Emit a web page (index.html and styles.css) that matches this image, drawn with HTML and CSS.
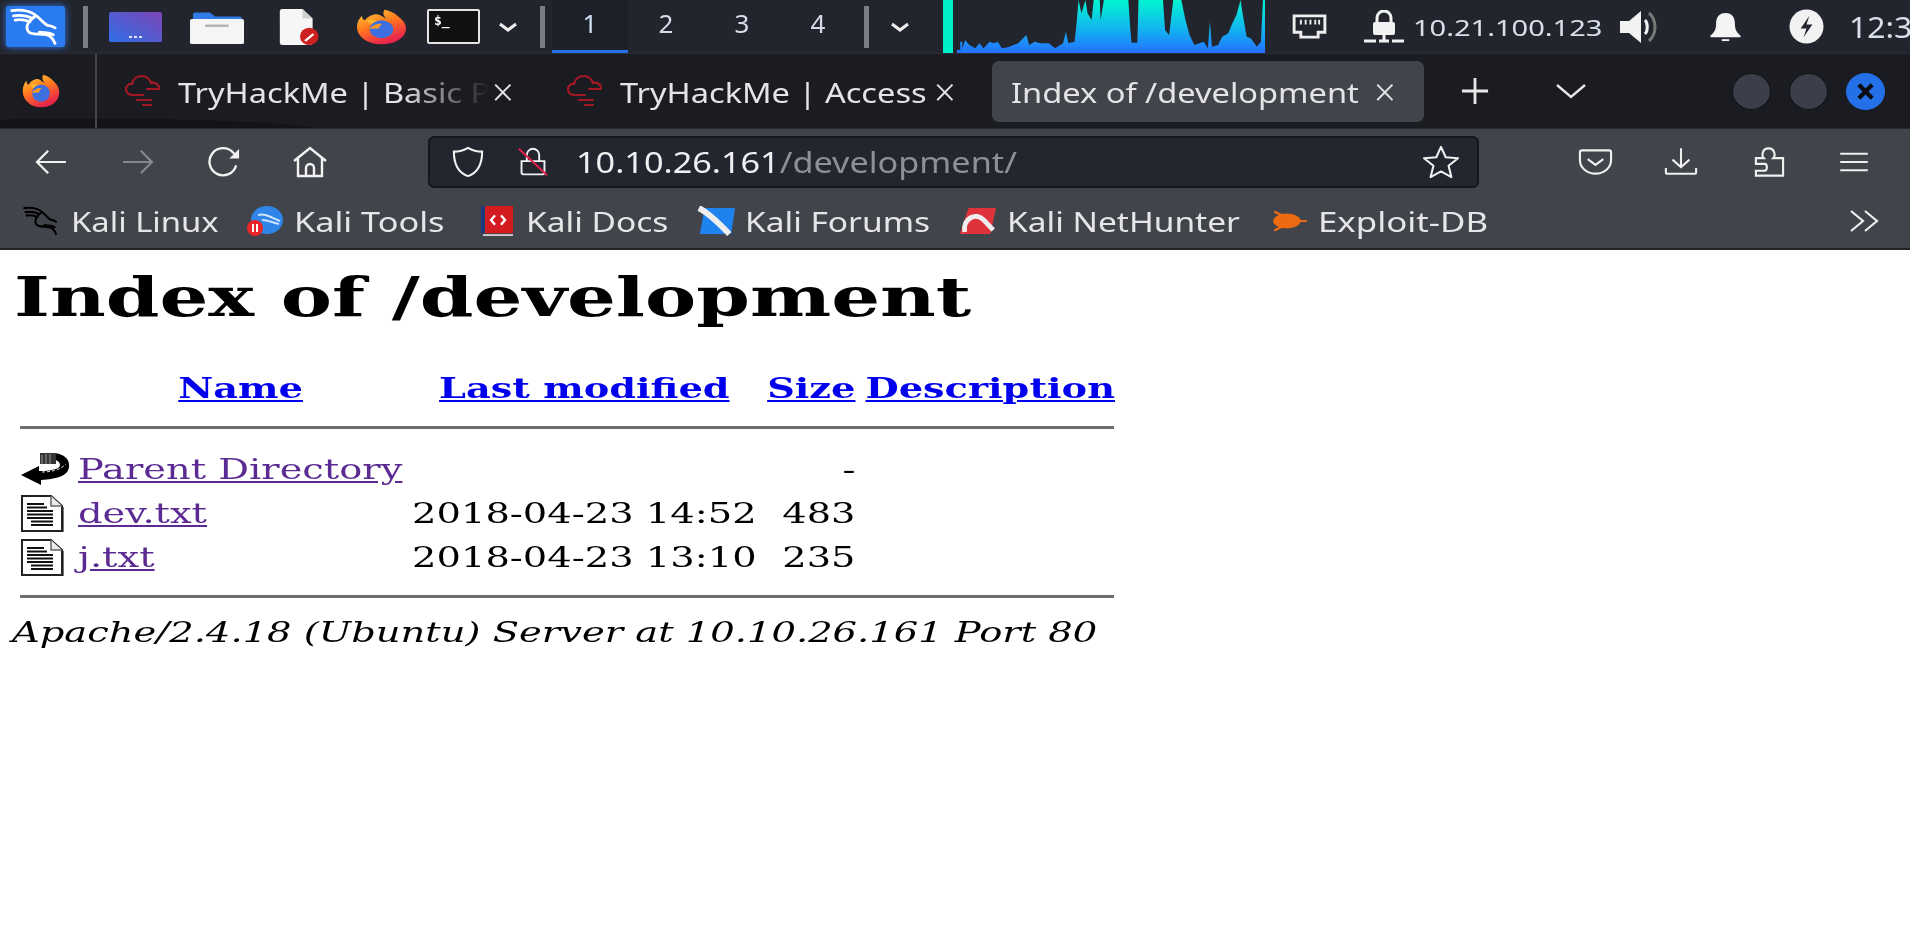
FILE: index.html
```html
<!DOCTYPE html>
<html lang="en">
<head>
<meta charset="utf-8">
<title>Index of /development</title>
<link rel="stylesheet" href="styles.css">
</head>
<body>
<svg class="defs" width="0" height="0" aria-hidden="true">
  <defs>
    <linearGradient id="gGraph" x1="0" y1="0" x2="0" y2="1"><stop offset="0" stop-color="#00f5d0"/><stop offset=".55" stop-color="#12b4f0"/><stop offset="1" stop-color="#2470ff"/></linearGradient>
    <linearGradient id="gPurple" x1="0" y1="1" x2="1" y2="0"><stop offset="0" stop-color="#2f6fe8"/><stop offset="1" stop-color="#7c45b5"/></linearGradient>
    <linearGradient id="gFox" x1="0" y1="0" x2=".5" y2="1"><stop offset="0" stop-color="#ffd53a"/><stop offset=".5" stop-color="#ff7a1e"/><stop offset="1" stop-color="#e8234c"/></linearGradient>
    <symbol id="fox" viewBox="0 0 52 48" preserveAspectRatio="none">
      <path d="M26 47C11 47 1 36 1 24c0-6 2-11 5-15 0 3 1 5 3 6 2-4 6-7 11-8 5 0 6 3 11 6-3-4-4-8-2-12 7 2 11 5 15 10 4 4 7 9 7 15 0 12-11 21-25 21z" fill="url(#gFox)"/>
      <path d="M11 15c4-2 9-1 12 2-3 0-6 1-7 3-3-1-4-3-5-5z" fill="#ffb52e"/>
      <circle cx="26" cy="27" r="12" fill="#3d6fe0"/>
      <path d="M14 27c2-5 8-8 13-7-3 2-4 4-3 6-4 0-7 0-10 1z" fill="#ff9a25"/>
    </symbol>
    <symbol id="dragon" viewBox="0 0 60 44" preserveAspectRatio="none">
      <path d="M2 3c9-1 20 0 27 5 6 4 9 9 14 12 M4 9c8-1 16 0 22 3 M6 14c6-1 12 0 17 2 M30 9c-8 5-13 12-9 18 4 5 13 2 21 4 5 1 8 5 10 10 M34 28c6 1 11 0 16 3 M43 20c3 0 6 1 9 3" fill="none" stroke="currentColor" stroke-width="3.2" stroke-linecap="round"/>
    </symbol>
    <symbol id="cloud" viewBox="0 0 40 34">
      <path d="M8 21c-5 0-7-3-7-6s3-6 6-5c1-5 5-8 10-8 4 0 8 3 9 7 2-1 7 0 8 4M8 21h10M22 15h12M12 26h14M18 31h8" fill="none" stroke="#a31822" stroke-width="2.2" stroke-linecap="round"/>
    </symbol>
    <symbol id="doc" viewBox="0 0 44 37">
      <path d="M43 12v25H4" fill="none" stroke="#777" stroke-width="2"/>
      <path d="M2 1h29l11 10v25H2z" fill="#fff" stroke="#222" stroke-width="2"/>
      <path d="M31 1v10h11" fill="#ececec" stroke="#666" stroke-width="1.5"/>
      <path d="M7 9h17M7 12.500h20M7 16h26M7 19.500h26M7 23h26M11 26.500h22M11 30h22" stroke="#111" stroke-width="2"/>
    </symbol>
  </defs>
</svg>

<div class="screen">
  <header class="panel">
    <div class="kali-tile"><svg class="kali-dragon"><use href="#dragon"/></svg></div>
    <i class="sep sep-a"></i>
    <svg class="launcher l-desktop" viewBox="0 0 53 36" preserveAspectRatio="none"><rect y="0" width="53" height="36" rx="2" fill="url(#gPurple)"/><path d="M20 30h3M25 30h3M30 30h3" stroke="#dfe6ff" stroke-width="2.4"/></svg>
    <svg class="launcher l-folder" viewBox="0 0 54 42" preserveAspectRatio="none"><path d="M3 6a3 3 0 0 1 3-3h14l5 5h24a3 3 0 0 1 3 3v6H3z" fill="#2f7be8"/><rect y="11" width="54" height="31" rx="2" fill="#f5f5f5"/><rect x="15" y="18" width="24" height="3" rx="1.5" fill="#b4b4b4"/></svg>
    <svg class="launcher l-file" viewBox="0 0 50 46" preserveAspectRatio="none"><path d="M1 3a3 3 0 0 1 3-3h24l12 12v31a3 3 0 0 1-3 3H4a3 3 0 0 1-3-3z" fill="#f6f6f6"/><path d="M28 0l12 12H28z" fill="#cfcfcf"/><circle cx="36" cy="35" r="11" fill="#cc1f1f"/><path d="M30 40l10-9 2 2-10 9z" fill="#fff"/></svg>
    <svg class="launcher l-fox"><use href="#fox"/></svg>
    <div class="term"><span>$_</span></div>
    <svg class="chev l-chev1" viewBox="0 0 20 10"><path d="M2 2l8 6 8-6" fill="none" stroke="#eee" stroke-width="3"/></svg>
    <i class="sep sep-b"></i>
    <nav class="workspaces">
      <span class="ws ws-on">1</span><span class="ws">2</span><span class="ws">3</span><span class="ws">4</span>
    </nav>
    <i class="sep sep-c"></i>
    <svg class="chev l-chev2" viewBox="0 0 20 10"><path d="M2 2l8 6 8-6" fill="none" stroke="#eee" stroke-width="3"/></svg>
    <i class="cpu-bar"></i>
    <svg class="graph" viewBox="780 0 755 159" preserveAspectRatio="none"><polygon fill="url(#gGraph)" points="780,159 780,150 788,150 788,125 793,125 793,145 800,120 810,135 825,145 835,130 845,145 860,125 870,130 880,125 890,145 905,142 930,130 950,105 957,135 970,125 985,130 1005,130 1020,145 1040,130 1047,95 1053,130 1068,125 1072,85 1078,0 1085,40 1095,0 1100,40 1110,60 1115,0 1130,0 1132,60 1140,0 1200,0 1205,90 1208,128 1222,128 1225,0 1285,0 1290,90 1300,105 1310,0 1330,0 1340,60 1350,105 1362,135 1385,125 1395,145 1400,65 1405,140 1420,135 1430,110 1445,100 1455,70 1465,45 1475,0 1480,40 1490,110 1500,115 1515,140 1525,125 1530,0 1535,0 1535,159"/></svg>
    <svg class="tray t-net" viewBox="0 0 36 26"><path d="M2 2h32v17h-7v5H9v-5H2z" fill="none" stroke="#eee" stroke-width="3"/><path d="M9 6v5M14 6v5M19 6v5M24 6v5M28 6v5" stroke="#eee" stroke-width="2"/></svg>
    <svg class="tray t-lock" viewBox="0 0 40 34"><path d="M13 12V8a7 7 0 0 1 14 0v4" fill="none" stroke="#f2f2f2" stroke-width="3"/><rect x="9" y="12" width="22" height="13" rx="2" fill="#f2f2f2"/><path d="M0 31h12M15 31h10M28 31h12M20 25v6" stroke="#f2f2f2" stroke-width="3"/></svg>
    <span class="ip"><span class="wide">10.21.100.123</span></span>
    <svg class="tray t-vol" viewBox="0 0 42 34"><path d="M1 11h9l12-10v32L10 23H1z" fill="#f2f2f2"/><path d="M26 10c3 3 3 11 0 14" fill="none" stroke="#f2f2f2" stroke-width="3"/><path d="M30 3c8 7 8 21 0 28" fill="none" stroke="#777" stroke-width="3"/></svg>
    <svg class="tray t-bell" viewBox="0 0 34 32"><path d="M17 1c7 0 10 5 10 11 0 7 2 10 6 13v2H1v-2c4-3 6-6 6-13C7 6 10 1 17 1z" fill="#f4f4f4"/><rect x="13" y="29" width="8" height="2" fill="#f4f4f4"/></svg>
    <svg class="tray t-power" viewBox="0 0 36 36"><circle cx="18" cy="18" r="17.5" fill="#f2f2f2"/><path d="M21 7l-9 13h6l-3 9 9-13h-6z" fill="#23252e"/></svg>
    <span class="clock">12:3</span>
  </header>

  <section class="tabbar">
    <div class="tab-home"><svg class="fox-small"><use href="#fox"/></svg></div>
    <div class="tab tab-one">
      <svg class="favicon"><use href="#cloud"/></svg>
      <span class="tab-title fade"><span class="wide">TryHackMe | Basic Pentesting</span></span>
      <span class="tab-x">×</span>
    </div>
    <div class="tab tab-two">
      <svg class="favicon"><use href="#cloud"/></svg>
      <span class="tab-title"><span class="wide">TryHackMe | Access</span></span>
      <span class="tab-x">×</span>
    </div>
    <div class="tab tab-active">
      <span class="tab-title"><span class="wide">Index of /development</span></span>
      <span class="tab-x">×</span>
    </div>
    <svg class="tab-plus" viewBox="0 0 30 30"><path d="M15 1v28M1 15h28" stroke="#e8e8e8" stroke-width="3"/></svg>
    <svg class="tab-list" viewBox="0 0 30 16"><path d="M1 2l14 12L29 2" fill="none" stroke="#e8e8e8" stroke-width="2.4"/></svg>
    <div class="win-buttons">
      <i class="win"></i><i class="win"></i>
      <i class="win win-close"><svg viewBox="0 0 20 20"><path d="M3 3l14 14M17 3L3 17" stroke="#0c0c10" stroke-width="4.5"/></svg></i>
    </div>
  </section>

  <section class="toolbar">
    <svg class="tool t-back" viewBox="0 0 36 30"><path d="M34 15H3M15 3L3 15l12 12" fill="none" stroke="#f2f2f2" stroke-width="2.4"/></svg>
    <svg class="tool t-forward" viewBox="0 0 36 30"><path d="M2 15h31M21 3l12 12-12 12" fill="none" stroke="#85878c" stroke-width="2.4"/></svg>
    <svg class="tool t-reload" viewBox="0 0 36 32"><path d="M30 20a14 14 0 1 1-3-13l4 4" fill="none" stroke="#f2f2f2" stroke-width="2.4"/><path d="M33 3v10H23z" fill="#f2f2f2"/></svg>
    <svg class="tool t-home" viewBox="0 0 36 32"><path d="M2 15L18 2l16 13M6 12v18h24V12M14 30v-8a4 4 0 0 1 8 0v8" fill="none" stroke="#f2f2f2" stroke-width="2.4"/></svg>
    <div class="urlbar">
      <svg class="url-icon shield" viewBox="0 0 36 34"><path d="M18 2c5 3 10 4 15 4 0 13-4 22-15 26C7 28 3 19 3 6c5 0 10-1 15-4z" fill="none" stroke="#f0f0f0" stroke-width="2.2"/></svg>
      <svg class="url-icon padlock" viewBox="0 0 34 34"><path d="M10 16V9a7 7 0 0 1 14 0v7M4 16h26v13a2 2 0 0 1-2 2H6a2 2 0 0 1-2-2z" fill="none" stroke="#f0f0f0" stroke-width="2.2"/><path d="M1 2l32 30" stroke="#e0204c" stroke-width="2.2"/></svg>
      <span class="url"><span class="url-wide"><span class="url-host">10.10.26.161</span><span class="url-path">/development/</span></span></span>
      <svg class="url-icon star" viewBox="0 0 40 36"><path d="M20 2l5 11 13 1-10 8 3 12-11-6-11 6 3-12L2 14l13-1z" fill="none" stroke="#f0f0f0" stroke-width="2.2" stroke-linejoin="round"/></svg>
    </div>
    <svg class="tool t-pocket" viewBox="0 0 36 28"><path d="M4 2h28a2 2 0 0 1 2 2v8c0 8-7 14-16 14S2 20 2 12V4a2 2 0 0 1 2-2z" fill="none" stroke="#f0f0f0" stroke-width="2.2"/><path d="M10 11l8 6 8-6" fill="none" stroke="#f0f0f0" stroke-width="2.2"/></svg>
    <svg class="tool t-download" viewBox="0 0 36 30"><path d="M18 1v20M9 13l9 8 9-8M2 22v5a1 1 0 0 0 1 1h30a1 1 0 0 0 1-1v-5" fill="none" stroke="#f0f0f0" stroke-width="2.2"/></svg>
    <svg class="tool t-puzzle" viewBox="0 0 34 32"><path d="M3 12h8c-2-2-2-10 5-10s7 8 5 10h10v18H3v-5h9c3 0 3-7 0-7H3z" fill="none" stroke="#f0f0f0" stroke-width="2.2"/></svg>
    <svg class="tool t-menu" viewBox="0 0 32 24"><path d="M1 3h30M1 12h30M1 21h30" stroke="#f0f0f0" stroke-width="2.2"/></svg>
  </section>

  <section class="bookmarks">
    <span class="mark m-linux"><svg class="mark-icon black"><use href="#dragon"/></svg><span class="wide">Kali Linux</span></span>
    <span class="mark m-tools"><svg class="mark-icon" viewBox="0 0 38 30" preserveAspectRatio="none"><ellipse cx="21" cy="14" rx="16" ry="14" fill="#2f86e8"/><path d="M12 9c7-2 12 2 22 6M16 14c5 0 9 2 17 4" stroke="#cfe4ff" stroke-width="2" fill="none"/><circle cx="9" cy="22" r="8" fill="#e8262a"/><path d="M7 18v8M11 18v8" stroke="#fff" stroke-width="2"/></svg><span class="wide">Kali Tools</span></span>
    <span class="mark m-docs"><svg class="mark-icon" viewBox="0 0 38 32" preserveAspectRatio="none"><rect x="3" y="0" width="32" height="29" fill="#d31b20"/><rect x="3" y="0" width="4" height="29" fill="#1c3a78"/><path d="M17 10l-4 5 4 5M23 10l4 5-4 5" stroke="#fff" stroke-width="2.4" fill="none"/><path d="M5 31h30" stroke="#ccc" stroke-width="2"/></svg><span class="wide">Kali Docs</span></span>
    <span class="mark m-forums"><svg class="mark-icon" viewBox="0 0 40 30" preserveAspectRatio="none"><path d="M8 2h32l-4 26H3z" fill="#1e83ee"/><path d="M2 2c8 4 18 12 32 26" stroke="#eee" stroke-width="6" fill="none"/></svg><span class="wide">Kali Forums</span></span>
    <span class="mark m-hunter"><svg class="mark-icon" viewBox="0 0 40 30" preserveAspectRatio="none"><path d="M10 2h29l-6 26H1z" fill="#e0323a"/><path d="M6 26c-2-14 12-20 20-12l10 10" stroke="#eee" stroke-width="5" fill="none"/></svg><span class="wide">Kali NetHunter</span></span>
    <span class="mark m-edb"><svg class="mark-icon" viewBox="0 0 36 26"><ellipse cx="16" cy="13" rx="13" ry="7" fill="#ed6a12"/><path d="M26 13h9M4 4l8 4M4 22l8-4" stroke="#ed6a12" stroke-width="2"/></svg><span class="wide">Exploit-DB</span></span>
    <svg class="more" viewBox="0 0 32 24"><path d="M2 2l12 10L2 22M16 2l12 10-12 10" fill="none" stroke="#eee" stroke-width="2.2"/></svg>
  </section>

  <main class="page">
    <h1 class="title"><span class="title-text">Index of /development</span></h1>
    <table class="listing">
      <tr class="head-row">
        <th class="c-icon"></th>
        <th class="c-name"><a href="#n">Name</a></th>
        <th class="c-date"><a href="#m">Last modified</a></th>
        <th class="c-size"><a href="#s">Size</a></th>
        <th class="c-desc"><a href="#d">Description</a></th>
      </tr>
      <tr class="rule-row"><td colspan="5"><hr class="rule"></td></tr>
      <tr class="file-row">
        <td class="c-icon"><svg class="back-icon" viewBox="0 0 50 34"><path d="M34 1c10 1 16 6 15 14-1 9-12 12-28 13v5L1 23l18-9v5c12 0 21-2 21-6 0-3-3-5-6-5z" fill="#000"/><path d="M20 1h16v11H20z" fill="#333"/><path d="M22 3v9M26 2v10M30 2v10" stroke="#999" stroke-width="1"/><path d="M22 20c9 0 18-2 24-8" fill="none" stroke="#ddd" stroke-width="1" stroke-dasharray="3 2"/></svg></td>
        <td class="c-name"><a href="#p" class="visited">Parent Directory</a></td>
        <td class="c-date"></td>
        <td class="c-size"><span class="num">-</span></td>
        <td class="c-desc"></td>
      </tr>
      <tr class="file-row">
        <td class="c-icon"><svg class="doc-icon"><use href="#doc"/></svg></td>
        <td class="c-name"><a href="#f1" class="visited">dev.txt</a></td>
        <td class="c-date"><span class="cell">2018-04-23 14:52</span></td>
        <td class="c-size"><span class="num">483</span></td>
        <td class="c-desc"></td>
      </tr>
      <tr class="file-row">
        <td class="c-icon"><svg class="doc-icon"><use href="#doc"/></svg></td>
        <td class="c-name"><a href="#f2" class="visited">j.txt</a></td>
        <td class="c-date"><span class="cell">2018-04-23 13:10</span></td>
        <td class="c-size"><span class="num">235</span></td>
        <td class="c-desc"></td>
      </tr>
      <tr class="rule-row rule-end"><td colspan="5"><hr class="rule"></td></tr>
    </table>
    <address class="sig"><span class="cell">Apache/2.4.18 (Ubuntu) Server at 10.10.26.161 Port 80</span></address>
  </main>
</div>
</body>
</html>
```
FILE: styles.css
```css
* { box-sizing: border-box; }
html, body { margin: 0; height: 100%; background: #fff; overflow: hidden; }
.defs { position: absolute; }
.screen { width: 1910px; height: 943px; overflow: hidden; filter: blur(0.6px); font-family: "Noto Sans", sans-serif; }
svg { display: block; flex: none; }

/* the reference is horizontally stretched: text is widened without changing its height */
.wide { display: inline-block; transform: scaleX(1.207); transform-origin: 0 50%; white-space: nowrap; }

/* desktop panel */
.panel { height: 54px; background: #23252e; border-bottom: 1px solid #2b2d36; display: flex; align-items: center; overflow: hidden; white-space: nowrap; color: #e8e8e8; }
.panel > * { flex: none; }
.kali-tile { margin-left: 6px; width: 59px; height: 41px; border-radius: 3px; background: #2b7bf0; box-shadow: 0 0 7px #2b7bf0; display: flex; align-items: center; justify-content: center; color: #fff; }
.kali-dragon { width: 52px; height: 38px; }
.sep { width: 5px; height: 42px; background: #7b7d84; }
.sep-a { margin-left: 18px; }
.l-desktop { margin-left: 21px; width: 53px; height: 30px; }
.l-folder { margin-left: 28px; width: 54px; height: 34px; }
.l-file { margin-left: 35px; width: 42px; height: 36px; }
.l-fox { margin-left: 35px; width: 51px; height: 36px; }
.term { margin-left: 20px; width: 53px; height: 35px; background: #111; border: 2px solid #e4e4e4; border-radius: 2px; font: bold 13px "DejaVu Sans Mono", monospace; color: #fff; padding: 3px 0 0 5px; line-height: 14px; }
.chev { width: 20px; height: 10px; }
.l-chev1 { margin-left: 18px; }
.sep-b { margin-left: 22px; }
.workspaces { margin-left: 7px; display: flex; height: 54px; }
.ws { width: 76px; height: 54px; font-size: 26px; line-height: 47px; text-align: center; color: #d6dbe6; }
.ws-on { background: #1e2029; border-bottom: 4px solid #2470e8; color: #cfe0f5; }
.sep-c { margin-left: 8px; }
.l-chev2 { margin-left: 21px; }
.cpu-bar { margin-left: 33px; width: 10px; height: 53px; background: #00f0cc; }
.graph { margin-left: 4px; width: 308px; height: 53px; }
.t-net { margin-left: 27px; width: 35px; height: 25px; }
.t-lock { margin-left: 37px; width: 40px; height: 34px; }
.ip { margin-left: 9px; width: 187px; font-size: 22px; color: #d8e0ea; }
.ip .wide { transform: scaleX(1.32); }
.t-vol { margin-left: 19px; width: 42px; height: 34px; }
.t-bell { margin-left: 48px; width: 33px; height: 30px; }
.t-power { margin-left: 47px; width: 35px; height: 35px; }
.clock { margin-left: 25px; font-size: 29px; color: #d8e0ea; display: inline-block; transform: scaleX(1.1); transform-origin: 0 50%; }

/* browser tab strip */
.tabbar { height: 74px; background: radial-gradient(ellipse 320px 16px at 90px 76px, #131418 70%, transparent 72%), #1b1c21; display: flex; align-items: center; color: #e4e4e6; white-space: nowrap; }
.tab-home { width: 97px; height: 74px; border-right: 2px solid #44464c; display: flex; align-items: center; justify-content: center; }
.fox-small { width: 38px; height: 34px; margin-right: 14px; }
.tab { display: flex; align-items: center; height: 61px; flex: none; }
.favicon { width: 40px; height: 34px; margin-right: 13px; }
.tab-title { font-size: 27px; overflow: hidden; flex: none; padding-top: 2px; }
.tab-x { font-size: 38px; line-height: 38px; font-weight: 300; color: #e4e4e6; }
.tab-one { margin-left: 28px; width: 442px; }
.tab-one .tab-title { width: 312px; }
.fade { -webkit-mask-image: linear-gradient(to right, #000 72%, transparent 100%); mask-image: linear-gradient(to right, #000 72%, transparent 100%); }
.tab-two { width: 425px; }
.tab-two .tab-title { width: 312px; }
.tab-active { width: 432px; background: #42444c; border-radius: 7px; padding-left: 19px; }
.tab-active .tab-title { width: 363px; }
.tab-one .tab-x, .tab-two .tab-x { margin-left: 2px; }
.tab-plus { margin-left: 37px; width: 28px; height: 28px; }
.tab-list { margin-left: 67px; width: 30px; height: 16px; }
.win-buttons { margin-left: 146px; display: flex; gap: 18px; }
.win { width: 39px; height: 37px; border-radius: 50%; background: #3c3f4a; border: 1px solid #101115; display: flex; align-items: center; justify-content: center; }
.win-close { background: #2470e8; border-color: #2470e8; }
.win-close svg { width: 19px; height: 19px; }

/* navigation toolbar */
.toolbar { height: 64px; padding-top: 2px; background: #42444c; border-top: 1px solid #2a2b30; display: flex; align-items: center; }
.tool { flex: none; }
.t-back { margin-left: 34px; width: 34px; height: 28px; }
.t-forward { margin-left: 53px; width: 34px; height: 28px; }
.t-reload { margin-left: 52px; width: 35px; height: 31px; }
.t-home { margin-left: 50px; width: 36px; height: 32px; }
.urlbar { margin-left: 100px; width: 1051px; height: 52px; background: #23252f; border: 2px solid #15161b; border-radius: 6px; display: flex; align-items: center; }
.url-icon { flex: none; }
.shield { margin-left: 20px; width: 36px; height: 32px; }
.padlock { margin-left: 30px; width: 34px; height: 30px; }
.url { margin-left: 26px; font-size: 29px; width: 845px; flex: none; white-space: nowrap; }
.url-wide { display: inline-block; transform: scaleX(1.18); transform-origin: 0 50%; }
.url-host { color: #f0f0f2; }
.url-path { color: #8e9096; }
.star { width: 40px; height: 34px; }
.t-pocket { margin-left: 99px; width: 35px; height: 28px; }
.t-download { margin-left: 51px; width: 34px; height: 31px; }
.t-puzzle { margin-left: 55px; width: 33px; height: 32px; }
.t-menu { margin-left: 53px; width: 30px; height: 22px; }

/* bookmarks */
.bookmarks { height: 58px; padding-top: 2px; background: #42444c; border-bottom: 2px solid #24252a; display: flex; align-items: center; color: #e6e6e8; font-size: 27px; white-space: nowrap; }
.bookmarks .wide { transform: scaleX(1.24); }
.bookmarks .m-linux .wide { transform: scaleX(1.215); }
.bookmarks .m-tools .wide { transform: scaleX(1.27); }
.bookmarks .m-edb .wide { transform: scaleX(1.29); }
.mark { display: flex; align-items: center; flex: none; }
.mark-icon { width: 38px; height: 30px; margin-right: 10px; flex: none; }
.black { color: #000; }
.m-linux { margin-left: 23px; width: 223px; }
.m-tools { width: 232px; }
.m-docs { width: 219px; }
.m-forums { width: 262px; }
.m-hunter { width: 311px; }
.m-edb { width: 579px; }
.more { width: 32px; height: 24px; }

/* directory listing */
.page { background: #fff; color: #000; font-family: "DejaVu Serif", serif; font-size: 28px; padding-left: 14px; }
.title { margin: 0; padding-top: 15px; font-size: 54px; line-height: 64px; font-weight: bold; }
.title-text { display: inline-block; transform: scaleX(1.422); transform-origin: 0 50%; white-space: nowrap; }
.listing { border-collapse: collapse; margin: 39px 0 0 6px; table-layout: fixed; width: 1094px; }
.listing td, .listing th { padding: 0; }
.c-icon { width: 58px; }
.c-name { width: 334px; }
.c-date { width: 355px; }
.c-size { width: 88px; text-align: right; }
.c-desc { width: 259px; text-align: left; }
th.c-name, th.c-date, th.c-size, th.c-desc { text-align: center; }
.listing .head-row th { padding-top: 2px; }
.listing th.c-name { padding-right: 8px; }
.listing th.c-date { padding-right: 10px; }
.listing th.c-desc { padding-left: 11px; }
th a { display: inline-block; transform: scaleX(1.367); transform-origin: 50% 50%; white-space: nowrap; }
td a { display: inline-block; transform: scaleX(1.37); transform-origin: 0 50%; white-space: nowrap; }
.cell { display: inline-block; transform: scaleX(1.373); transform-origin: 0 50%; white-space: nowrap; }
.num { display: inline-block; transform: scaleX(1.37); transform-origin: 100% 50%; }
.head-row { height: 38px; }
.listing a { color: #0000ee; }
.listing a.visited { color: #5b2b93; }
.rule-row { height: 41px; }
.rule-row td { vertical-align: middle; padding-top: 2px; }
.rule-end { height: 36px; }
.listing .rule-end td { padding-top: 0; padding-bottom: 2px; }
.rule { margin: 0; border: 0; height: 3px; background: #6e6e6e; }
.file-row { height: 44px; }
.file-row td { vertical-align: middle; }
.back-icon { width: 50px; height: 34px; }
.doc-icon { width: 44px; height: 37px; }
.sig { font-style: italic; margin-left: -2px; line-height: 36px; }
```
